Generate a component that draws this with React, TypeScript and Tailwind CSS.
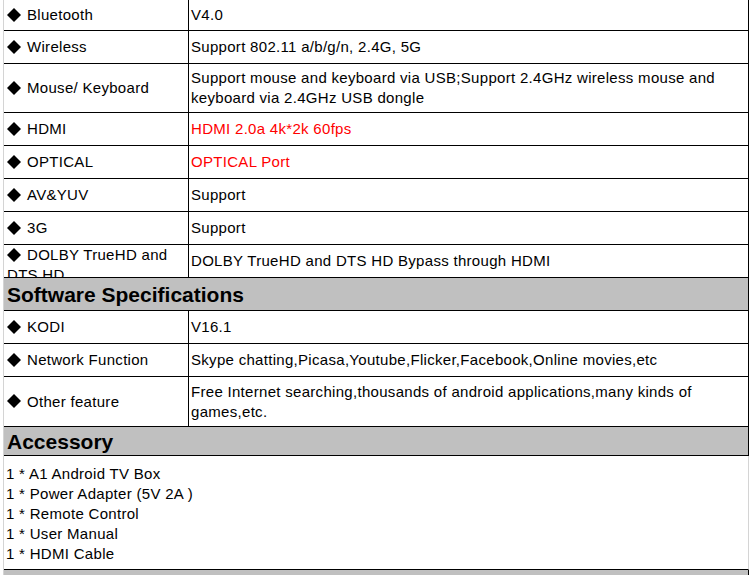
const hardware = [
  { label: "Bluetooth", value: ["V4.0"], h: "h-[31px]" },
  { label: "Wireless", value: ["Support 802.11 a/b/g/n, 2.4G, 5G"], h: "h-[33px]" },
  {
    label: "Mouse/ Keyboard",
    value: [
      "Support mouse and keyboard via USB;Support 2.4GHz wireless mouse and",
      "keyboard via 2.4GHz USB dongle",
    ],
    h: "h-[49px]",
  },
  { label: "HDMI", value: ["HDMI 2.0a 4k*2k 60fps"], h: "h-[33px]", red: true },
  { label: "OPTICAL", value: ["OPTICAL Port"], h: "h-[33px]", red: true },
  { label: "AV&YUV", value: ["Support"], h: "h-[33px]" },
  { label: "3G", value: ["Support"], h: "h-[33px]" },
  {
    label: "DOLBY TrueHD and DTS HD",
    value: ["DOLBY TrueHD and DTS HD Bypass through HDMI"],
    h: "h-[33px]",
    top: true,
  },
];

const software = [
  { label: "KODI", value: ["V16.1"], h: "h-[33px]" },
  {
    label: "Network Function",
    value: ["Skype chatting,Picasa,Youtube,Flicker,Facebook,Online movies,etc"],
    h: "h-[33px]",
  },
  {
    label: "Other feature",
    value: [
      "Free Internet searching,thousands of android applications,many kinds of",
      "games,etc.",
    ],
    h: "h-[50px]",
  },
];

const accessories = [
  "1 * A1 Android TV Box",
  "1 * Power Adapter (5V 2A )",
  "1 * Remote Control",
  "1 * User Manual",
  "1 * HDMI Cable",
];

type Row = {
  label: string;
  value: string[];
  h: string;
  red?: boolean;
  top?: boolean;
};

function Diamond() {
  return (
    <svg
      width="14"
      height="14"
      viewBox="0 0 14 14"
      className="inline-block align-[-1.5px] mr-[6px]"
    >
      <path d="M7 0 L14 7 L7 14 L0 7 Z" fill="#000" />
    </svg>
  );
}

function SpecRow({ row }: { row: Row }) {
  return (
    <div className={`flex border-b border-r border-black ${row.h}`}>
      {/* Label cell */}
      <div
        className={`w-[184px] shrink-0 pl-[3px] overflow-hidden flex ${
          row.top ? "items-start" : "items-center"
        }`}
      >
        <div className="leading-5">
          <Diamond />
          {row.label}
        </div>
      </div>
      {/* Value cell */}
      <div
        className={`flex-1 border-l border-black pl-[2px] flex items-center leading-5 ${
          row.red ? "text-[#ff0000]" : "text-black"
        }`}
      >
        <div>
          {row.value.map((line, i) => (
            <div key={i} className="whitespace-nowrap">
              {line}
            </div>
          ))}
        </div>
      </div>
    </div>
  );
}

function SectionHeader({ title, h }: { title: string; h: string }) {
  return (
    <div
      className={`flex items-center bg-[#c0c0c0] border-b border-r border-black pl-[3px] ${h}`}
    >
      <span className="text-[21px] font-bold leading-none tracking-normal">
        {title}
      </span>
    </div>
  );
}

export default function App() {
  return (
    <div
      className="w-[752px] h-[575px] overflow-hidden bg-white text-black text-[15px] tracking-[0.3px]"
      style={{ fontFamily: '"Liberation Sans", Arial, sans-serif' }}
    >
      <div className="ml-[3px] w-[746px] border-l border-[#d4d4d4]">
        {hardware.map((row) => (
          <SpecRow key={row.label} row={row} />
        ))}

        <SectionHeader title="Software Specifications" h="h-[33px]" />
        {software.map((row) => (
          <SpecRow key={row.label} row={row} />
        ))}

        <SectionHeader title="Accessory" h="h-[29px]" />
        {/* Accessory list */}
        <div className="h-[114px] border-b border-black border-r border-r-[#d4d4d4] pt-[8px] pl-[2px] leading-5">
          {accessories.map((item) => (
            <div key={item}>{item}</div>
          ))}
        </div>

        <div className="h-[10px] bg-[#c0c0c0] border-r border-black" />
      </div>
    </div>
  );
}
